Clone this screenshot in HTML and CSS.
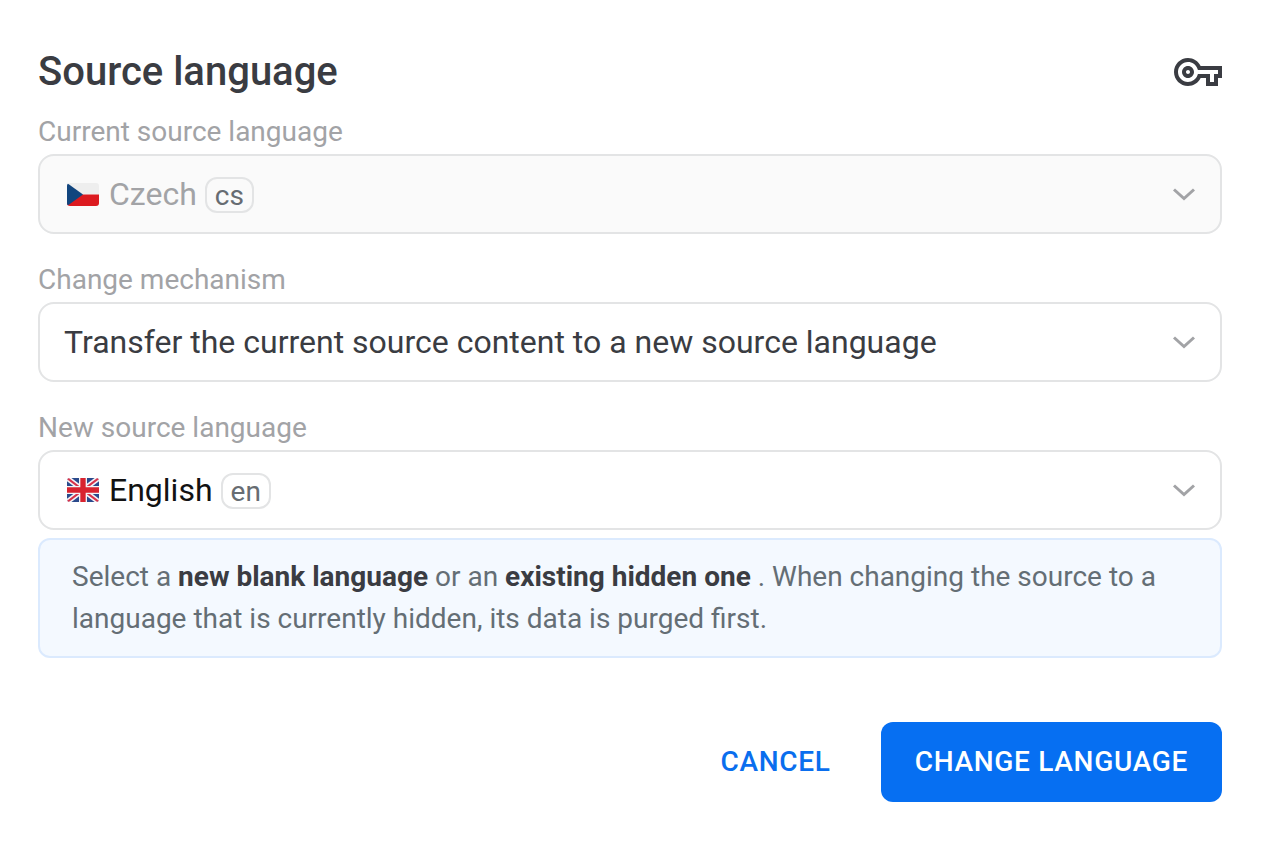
FILE: index.html
```html
<!DOCTYPE html>
<html lang="en">
<head>
<meta charset="utf-8">
<title>Source language</title>
<link rel="stylesheet" href="styles.css">
</head>
<body>
<main class="dialog">
  <header class="head">
    <h1 class="title">Source language</h1>
    <svg class="key" viewBox="0 0 24 24" aria-hidden="true">
      <path d="M22 19h-6v-4h-2.680c-1.140 2.420-3.600 4-6.320 4-3.860 0-7-3.140-7-7s3.140-7 7-7c2.720 0 5.170 1.580 6.320 4H24v6h-2v4zm-4-2h2v-4h2v-2H11.960l-.23-.67C11.030 8.340 9.140 7 7 7c-2.760 0-5 2.240-5 5s2.240 5 5 5c2.140 0 4.030-1.340 4.730-3.330l.23-.67H18v4zM7 15c-1.650 0-3-1.350-3-3s1.350-3 3-3 3 1.350 3 3-1.350 3-3 3zm0-4c-.55 0-1 .45-1 1s.45 1 1 1 1-.45 1-1-.45-1-1-1z"/>
    </svg>
  </header>

  <div class="field">
    <label class="label">Current source language</label>
    <div class="select disabled">
      <svg class="flag" viewBox="0 0 32 23" aria-hidden="true">
        <rect width="32" height="11.500" fill="#eeeeee"/>
        <rect y="11.500" width="32" height="11.500" fill="#dc1a1f"/>
        <path d="M0 0 L16 11.500 L0 23 Z" fill="#11457e"/>
      </svg>
      <span class="name">Czech</span>
      <span class="code">cs</span>
      <svg class="chev" viewBox="0 0 24 14" aria-hidden="true"><path d="M2 2.500 L12 11.500 L22 2.500"/></svg>
    </div>
  </div>

  <div class="field">
    <label class="label">Change mechanism</label>
    <div class="select">
      <span class="value">Transfer the current source content to a new source language</span>
      <svg class="chev" viewBox="0 0 24 14" aria-hidden="true"><path d="M2 2.500 L12 11.500 L22 2.500"/></svg>
    </div>
  </div>

  <div class="field last">
    <label class="label">New source language</label>
    <div class="select">
      <svg class="flag tall" viewBox="0 0 60 45" aria-hidden="true">
        <rect width="60" height="45" fill="#2b4a8c"/>
        <path d="M0 0 L60 45 M60 0 L0 45" stroke="#f4f4f6" stroke-width="10"/>
        <path d="M0 0 L60 45 M60 0 L0 45" stroke="#d8324a" stroke-width="4"/>
        <path d="M30 0 V45 M0 22.500 H60" stroke="#f4f4f6" stroke-width="15"/>
        <path d="M30 0 V45 M0 22.500 H60" stroke="#d8232f" stroke-width="10"/>
      </svg>
      <span class="name dark">English</span>
      <span class="code">en</span>
      <svg class="chev" viewBox="0 0 24 14" aria-hidden="true"><path d="M2 2.500 L12 11.500 L22 2.500"/></svg>
    </div>
  </div>

  <div class="note">
    Select a <b>new blank language</b> or an <b>existing hidden one</b> . When changing the source to a language that is currently hidden, its data is purged first.
  </div>

  <footer class="actions">
    <button class="btn text" type="button">CANCEL</button>
    <button class="btn primary" type="button">CHANGE LANGUAGE</button>
  </footer>
</main>
</body>
</html>
```
FILE: styles.css
```css
* { box-sizing: border-box; }
html, body { margin: 0; height: 100%; background: #ffffff; }
body { font-family: Roboto, "Liberation Sans", sans-serif; color: #3a3c42; }
.dialog { width: 1262px; height: 844px; padding: 48px 40px 42px 38px; display: flex; flex-direction: column; }
.head { display: flex; justify-content: space-between; align-items: center; height: 48px; margin-bottom: 16px; }
.title { margin: 0; font-size: 40px; line-height: 46px; font-weight: 500; color: #3a3c42; }
.key { width: 48px; height: 48px; fill: #3a3c42; }
.field { display: flex; flex-direction: column; margin-bottom: 26px; }
.field.last { margin-bottom: 8px; }
.label { font-size: 28px; line-height: 40px; height: 42px; color: #a2a3a6; }
.select { height: 80px; border: 2px solid #e3e4e5; border-radius: 16px; display: flex; align-items: center; padding: 0 24px; background: #ffffff; font-size: 32px; }
.select.disabled { background: #fafafa; }
.flag { width: 32px; height: 23px; border-radius: 3px; margin: 0 10px 0 3px; flex: none; }
.flag.tall { height: 24px; }
.name { color: #a2a3a6; }
.name.dark { color: #121212; }
.value { color: #3a3c42; flex: 1; }
.code { margin: 2px 0 0 8px; font-size: 28px; line-height: 32px; height: 36px; padding: 1px 8px 0; border: 2px solid #e3e4e5; border-radius: 12px; color: #676c72; }
.chev { width: 24px; height: 14px; margin-left: auto; fill: none; stroke: #a2a3a6; stroke-width: 3; }
.note { height: 120px; padding: 16px 32px; border: 2px solid #dbeafe; border-radius: 12px; background: #f4f9ff; color: #646e75; font-size: 28px; line-height: 42px; }
.note b { font-weight: 700; color: #3a3c42; }
.actions { display: flex; justify-content: flex-end; align-items: center; gap: 16px; margin-top: 64px; }
.btn { height: 80px; border: 0; border-radius: 12px; font-family: inherit; font-size: 28px; font-weight: 500; letter-spacing: 0.700px; padding: 0 34px 2px; }
.text { background: transparent; color: #0a6eee; }
.primary { background: #066ff2; color: #ffffff; }
```
